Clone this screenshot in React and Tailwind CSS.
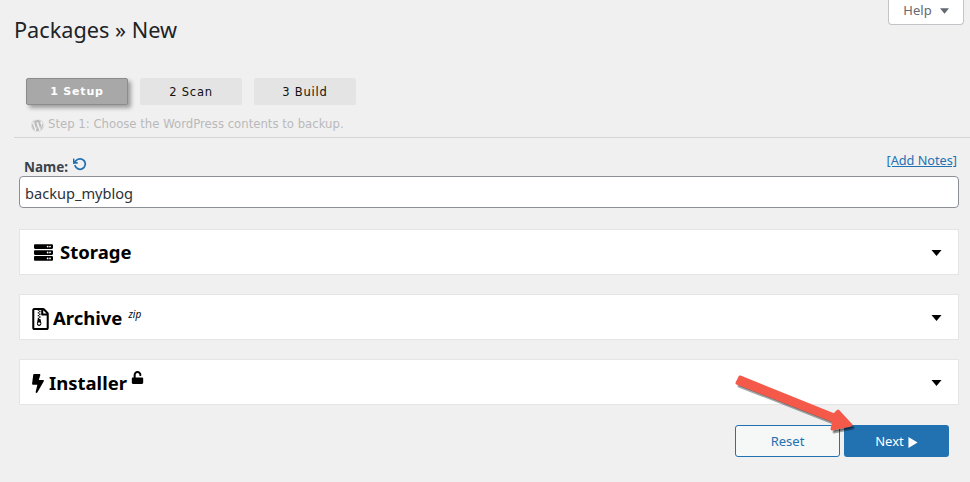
import { FaBolt, FaRegFileArchive, FaServer, FaUnlock, FaWordpress } from 'react-icons/fa'
import { FiRotateCcw } from 'react-icons/fi'

function Caret({ className }) {
  return (
    <svg viewBox="0 0 10 6" className={className}>
      <path d="M0 0h10L5 6z" fill="currentColor" />
    </svg>
  )
}

function Step({ label, active }) {
  if (active) {
    return (
      <div className="w-[102px] h-[27px] flex items-center justify-center pt-[1px] bg-[#a8a8a8] border border-[#8c8c8c] rounded-[2px] shadow-[3px_3px_4px_rgba(0,0,0,0.35)] text-white text-[11px] font-bold tracking-[0.8px] font-['DejaVu_Sans',sans-serif]">
        {label}
      </div>
    )
  }
  return (
    <div className="w-[102px] h-[27px] flex items-center justify-center pt-[2px] bg-[#e4e4e4] rounded-[2px] text-[#111] text-[11.5px] tracking-[0.8px] font-['DejaVu_Sans',sans-serif]">
      {label}
    </div>
  )
}

function Panel({ children, className = '' }) {
  return (
    <div className="h-[46px] bg-white border border-[#e5e5e5] flex items-center justify-between pt-[1px] pl-[12px] pr-[16px]">
      <div className={`flex items-center text-black font-bold text-[18.5px] leading-none ${className}`}>{children}</div>
      <Caret className="w-[11px] h-[6px] text-black" />
    </div>
  )
}

export default function App() {
  return (
    <div className="relative w-[970px] h-[482px] overflow-hidden bg-[#f0f0f1] font-['Noto_Sans',sans-serif]">
      {/* help tab */}
      <div className="absolute right-[6px] top-0 w-[76px] h-[25px] bg-white border border-t-0 border-[#c3c4c7] rounded-b-[4px] flex items-center justify-center gap-[8px] pb-[2px] text-[#646970] text-[13px]">
        Help
        <Caret className="w-[9px] h-[6px] text-[#646970]" />
      </div>

      <div className="pt-[15px]">
        <h1 className="pl-[14px] text-[21.7px] leading-[30px] text-[#1d2327]">Packages » New</h1>

        <div className="pl-[26px] mt-[33px] flex gap-[12px]">
          <Step label="1 Setup" active />
          <Step label="2 Scan" />
          <Step label="3 Build" />
        </div>

        <div className="pl-[31px] mt-[11px] h-[18px] flex items-center gap-[4px] text-[#b9b9b9] font-['DejaVu_Sans',sans-serif]">
          <FaWordpress className="w-[13px] h-[13px]" />
          <span className="text-[11.7px]">Step 1: Choose the WordPress contents to backup.</span>
        </div>

        <div className="ml-[14px] mt-[3px] h-px bg-[#d5d5d5]" />

        <div className="mx-[11px] pl-[8px]">
          <div className="flex justify-between h-[38px] pt-[19px]">
            <div className="flex items-start">
              <span className="pl-[5px] font-bold text-[13.5px] leading-[20px] text-[#3c434a]">Name:</span>
              <FiRotateCcw className="ml-[5px] w-[14px] h-[14px] text-[#2271b1] stroke-[3]" />
            </div>
            <a className="mr-[2px] text-[#2271b1] text-[12.7px] underline leading-[12px] -mt-[3px]">[Add Notes]</a>
          </div>
          <div className="h-[32px] bg-white border border-[#8c8f94] rounded-[4px] flex items-center px-[5px] pt-[3px] text-[14.6px] text-[#2c3338]">
            backup_myblog
          </div>

          <div className="mt-[21px] flex flex-col gap-[19px]">
            <Panel>
              <FaServer className="ml-[2px] mr-[7px] w-[19px] h-[19px]" />
              Storage
            </Panel>
            <Panel className="pt-[2px]">
              <FaRegFileArchive className="mr-[4px] w-[17px] h-[22px]" />
              Archive
              <span className="ml-[6px] -mt-[10px] text-[10px] italic font-normal">zip</span>
            </Panel>
            <Panel className="pt-[2px]">
              <FaBolt className="mr-[5px] w-[12px] h-[19px]" />
              Installer
              <FaUnlock className="ml-[4px] -mt-[12px] w-[13px] h-[13px]" />
            </Panel>
          </div>

          <div className="mt-[20px] mr-[10px] flex justify-end gap-[4px]">
            <button className="w-[105px] h-[32px] pt-[2px] bg-[#f6f7f7] border border-[#2271b1] rounded-[3px] text-[#2271b1] text-[13px]">
              Reset
            </button>
            <button className="w-[105px] h-[32px] pt-[2px] bg-[#2271b1] rounded-[3px] text-white text-[13px] flex items-center justify-center gap-[4px]">
              Next
              <svg viewBox="0 0 10 12" className="w-[10px] h-[11px]">
                <path d="M0 0l10 6-10 6z" fill="currentColor" />
              </svg>
            </button>
          </div>
        </div>
      </div>

      {/* annotation arrow */}
      <svg className="absolute left-0 top-0 pointer-events-none" width="970" height="482" viewBox="0 0 970 482">
        <path
          d="M737 383L740 377L834 415L838 411L851 425L832 429L834 421Z"
          fill="#000"
          fillOpacity="0.35"
          stroke="#000"
          strokeOpacity="0.35"
          strokeWidth="3"
          strokeLinejoin="round"
          transform="translate(2 3)"
        />
        <path
          d="M737 383L740 377L834 415L838 411L851 425L832 429L834 421Z"
          fill="#f4594a"
          stroke="#f4594a"
          strokeWidth="3"
          strokeLinejoin="round"
        />
      </svg>
    </div>
  )
}
